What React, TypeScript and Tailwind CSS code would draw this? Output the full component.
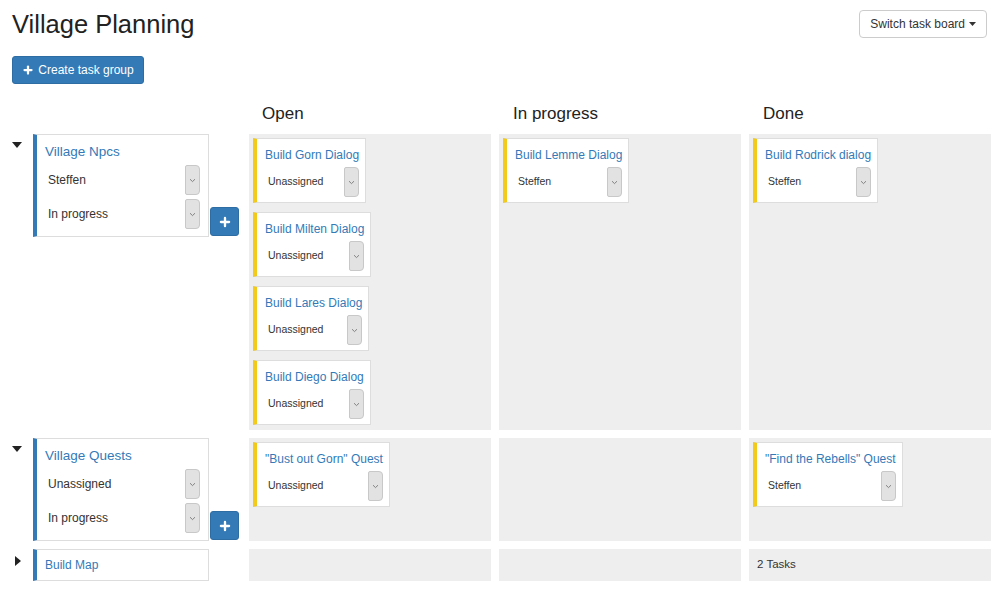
import { Plus } from "lucide-react";

const font = { fontFamily: '"Liberation Sans", Arial, sans-serif' };

type Task = { title: string; who: string };

const Chevron = () => (
  <svg width="7" height="5" viewBox="0 0 7 5" fill="none">
    <path d="M1 1.2 L3.5 3.6 L6 1.2" stroke="#777" strokeWidth="0.9" />
  </svg>
);

const SelectBox = () => (
  <div className="w-[15px] h-[30px] shrink-0 bg-[#e2e2e2] border border-[#c8c8c8] rounded-r-[4px] rounded-l-[2px] flex items-center justify-center">
    <Chevron />
  </div>
);

const TaskCard = ({ task }: { task: Task }) => (
  <div className="bg-white border border-[#ddd] border-l-4 border-l-[#f3c91a] pl-2 pr-[6px] pt-[9px] pb-[5px] flex flex-col gap-[5px]">
    <div className="text-[12px] leading-[14px] text-[#337ab7] whitespace-nowrap">{task.title}</div>
    <div className="flex items-center justify-between gap-2">
      <span className="pl-[3px] text-[10.5px] text-[#333]">{task.who}</span>
      <SelectBox />
    </div>
  </div>
);

const Column = ({ tasks }: { tasks: Task[] }) => (
  <div className="bg-[#eee] p-1 pb-[5px] flex flex-col items-start gap-[9px]">
    {tasks.map((t) => (
      <TaskCard key={t.title} task={t} />
    ))}
  </div>
);

const GroupSelect = ({ value }: { value: string }) => (
  <div className="flex items-center justify-between h-[30px]">
    <span className="pl-[3px] text-[12px] text-[#333]">{value}</span>
    <SelectBox />
  </div>
);

const GroupCard = ({ title, who, status }: { title: string; who: string; status: string }) => (
  <div className="self-start flex items-start">
    <div className="w-[21px] pt-[8px]">
      <svg width="10" height="6" viewBox="0 0 10 6">
        <path d="M0 0 H10 L5 6 Z" fill="#222" />
      </svg>
    </div>
    <div className="w-[176px] h-[103px] bg-white border border-[#ddd] border-l-4 border-l-[#337ab7] pl-2 pr-2 pt-[8px] flex flex-col gap-[4px]">
      <div className="text-[13.5px] leading-[18px] text-[#337ab7]">{title}</div>
      <GroupSelect value={who} />
      <GroupSelect value={status} />
    </div>
    <button className="self-end mb-px ml-px w-[29px] h-[29px] bg-[#337ab7] border border-[#2e6da4] rounded-[3px] flex items-center justify-center">
      <Plus className="w-[14px] h-[14px] text-white" strokeWidth={4} />
    </button>
  </div>
);

export default function App() {
  const row1: Task[][] = [
    [
      { title: "Build Gorn Dialog", who: "Unassigned" },
      { title: "Build Milten Dialog", who: "Unassigned" },
      { title: "Build Lares Dialog", who: "Unassigned" },
      { title: "Build Diego Dialog", who: "Unassigned" },
    ],
    [{ title: "Build Lemme Dialog", who: "Steffen" }],
    [{ title: "Build Rodrick dialog", who: "Steffen" }],
  ];
  const row2: Task[][] = [
    [{ title: "\"Bust out Gorn\" Quest", who: "Unassigned" }],
    [],
    [{ title: "\"Find the Rebells\" Quest", who: "Steffen" }],
  ];

  return (
    <div className="min-h-screen bg-white text-[#333] px-3 pt-[10px]" style={font}>
      <div className="flex justify-between items-start">
        <h1 className="text-[25.5px] leading-[28px] text-[#222]">Village Planning</h1>
        <button className="mr-[1px] h-[28px] px-[10px] border border-[#ccc] rounded-[4px] bg-white text-[12px] text-[#333] flex items-center gap-[4px]">
          Switch task board
          <svg width="7" height="4" viewBox="0 0 7 4">
            <path d="M0 0 H7 L3.5 4 Z" fill="#333" />
          </svg>
        </button>
      </div>

      <button className="mt-[18px] h-[28px] w-[132px] bg-[#337ab7] border border-[#2e6da4] rounded-[3px] text-white text-[12px] flex items-center justify-center gap-[4px]">
        <Plus className="w-[12px] h-[12px]" strokeWidth={4.5} />
        Create task group
      </button>

      <div className="grid grid-cols-[229px_242px_242px_242px] gap-x-2 mt-[20px] mb-[10px] h-[20px] text-[17px] leading-[20px] text-[#222]">
        <div />
        <div className="pl-[13px]">Open</div>
        <div className="pl-[14px]">In progress</div>
        <div className="pl-[14px]">Done</div>
      </div>

      <div className="grid grid-cols-[229px_242px_242px_242px] gap-2">
        <GroupCard title="Village Npcs" who="Steffen" status="In progress" />
        {row1.map((tasks, i) => (
          <Column key={i} tasks={tasks} />
        ))}

        <GroupCard title="Village Quests" who="Unassigned" status="In progress" />
        {row2.map((tasks, i) => (
          <Column key={i} tasks={tasks} />
        ))}

        <div className="flex items-start">
          <div className="w-[21px] pl-[3px] pt-[7px]">
            <svg width="6" height="10" viewBox="0 0 6 10">
              <path d="M0 0 L6 5 L0 10 Z" fill="#222" />
            </svg>
          </div>
          <div className="w-[176px] h-[32px] bg-white border border-[#ddd] border-l-4 border-l-[#337ab7] pl-2 flex items-center text-[12px] text-[#337ab7]">
            Build Map
          </div>
        </div>
        <div className="bg-[#eee] h-[32px]" />
        <div className="bg-[#eee] h-[32px]" />
        <div className="bg-[#eee] h-[32px] pl-2 flex items-center text-[11.5px] text-[#333]">2 Tasks</div>
      </div>
    </div>
  );
}
